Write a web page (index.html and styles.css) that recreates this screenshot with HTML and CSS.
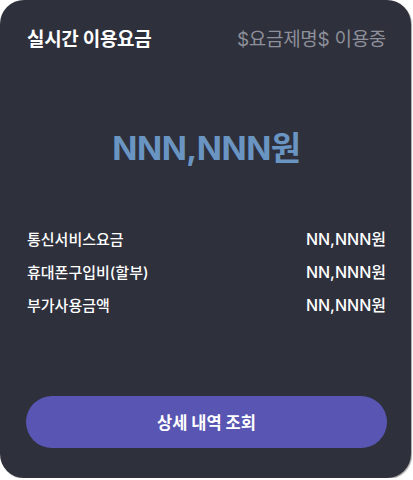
FILE: index.html
```html
<!DOCTYPE html>
<html lang="ko">
<head>
<meta charset="utf-8">
<link rel="stylesheet" href="styles.css">
</head>
<body>
<div class="card">
  <div class="header">
    <span class="title">실시간 이용요금</span>
    <span class="plan">$요금제명$ 이용중</span>
  </div>
  <div class="amount">NNN,NNN원</div>
  <ul class="rows">
    <li class="row"><span>통신서비스요금</span><span class="value">NN,NNN원</span></li>
    <li class="row"><span>휴대폰구입비(할부)</span><span class="value">NN,NNN원</span></li>
    <li class="row"><span>부가사용금액</span><span class="value">NN,NNN원</span></li>
  </ul>
  <button class="btn">상세 내역 조회</button>
</div>
</body>
</html>
```
FILE: styles.css
```css
html, body {
  margin: 0;
  padding: 0;
  background: #ffffff;
}
body {
  font-family: Inter, "Noto Sans CJK KR", sans-serif;
}
.card {
  box-sizing: border-box;
  width: 411px;
  height: 478px;
  background: #2e303c;
  border-radius: 24px;
  box-shadow: 1px 1px 1px rgba(0, 0, 0, 0.35);
  padding: 28px 24px 30px 26px;
  display: flex;
  flex-direction: column;
}
.header {
  display: flex;
  justify-content: space-between;
  align-items: center;
  height: 24px;
  line-height: 24px;
  padding: 0 1px 0 1px;
}
.title {
  color: #ffffff;
  font-size: 19px;
  font-weight: 700;
  letter-spacing: -0.3px;
}
.plan {
  color: #8d8f99;
  font-size: 19px;
  font-weight: 400;
  letter-spacing: -0.3px;
}
.amount {
  margin-top: 72px;
  height: 48px;
  line-height: 48px;
  text-align: center;
  color: #6a95c2;
  font-size: 33px;
  font-weight: 700;
  letter-spacing: -0.5px;
}
.rows {
  list-style: none;
  margin: 51px 0 0;
  padding: 0 1px;
}
.row {
  display: flex;
  justify-content: space-between;
  align-items: center;
  height: 33px;
  line-height: 33px;
  color: #ffffff;
  font-size: 15px;
  font-weight: 500;
}
.value {
  font-size: 16px;
}
.btn {
  margin-top: auto;
  width: 100%;
  height: 52px;
  border: none;
  border-radius: 26px;
  background: #5955b3;
  color: #ffffff;
  font-family: inherit;
  font-size: 16.5px;
  font-weight: 700;
  padding: 0;
}
```
